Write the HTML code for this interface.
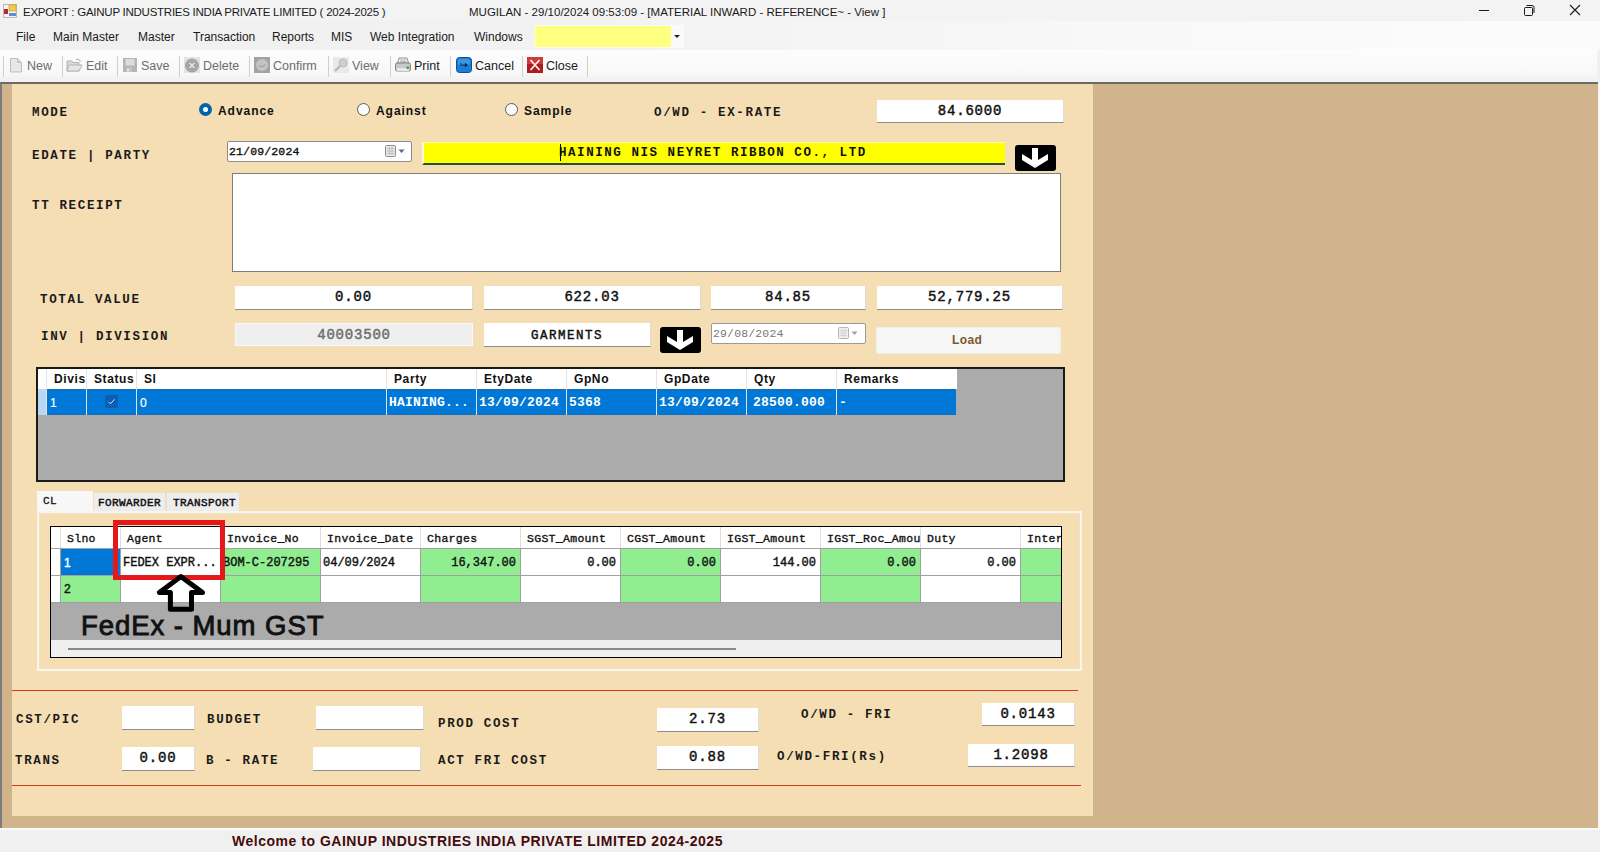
<!DOCTYPE html>
<html><head><meta charset="utf-8">
<style>
*{box-sizing:border-box;margin:0;padding:0}
html,body{width:1600px;height:852px;overflow:hidden;background:#f0f0f0;font-family:"Liberation Sans",sans-serif}
.a{position:absolute}
.nw{white-space:nowrap}
#title{left:0;top:0;width:1600px;height:21px;background:#f3f3f3}
#menu{left:0;top:21px;width:1600px;height:29px;background:linear-gradient(to right,#f0f0f0 0%,#f2f2f2 35%,#f6f6f6 60%,#fafafa 80%,#fbfbfb 100%)}
#tool{left:0;top:50px;width:1597px;height:33px;background:linear-gradient(#fdfdfd,#f8f8f8 70%,#efefef);border-bottom-right-radius:3px}
.tt{font-size:11.5px;color:#1a1a1a;white-space:nowrap;line-height:14px}
.mi{font-size:12px;color:#1a1a1a;white-space:nowrap;top:30px;line-height:14px}
.tb{font-size:12.5px;color:#6d6d6d;white-space:nowrap;top:59px;line-height:14px}
.sep{top:56px;width:1px;height:21px;background:#cfcfcf}
#mdi{left:0;top:82px;width:1598px;height:746px;background:#d2b48c;border-top:2px solid #6d6c64;border-left:2px solid #7d7d7d}
#form{left:12px;top:84px;width:1081px;height:732px;background:#f5deb3}
.lbl{font-size:12.5px;letter-spacing:1.65px;color:#1a1a1a;white-space:nowrap;font-family:"Liberation Mono",monospace;font-weight:bold;line-height:16px}
.tx{position:absolute;background:#fff;border-bottom:1px solid #8d8d8d;border-right:1px solid #dcdcdc;font-family:"Liberation Mono",monospace;font-weight:normal;-webkit-text-stroke:0.45px currentColor;font-size:14px;letter-spacing:0.8px;color:#111;text-align:center;white-space:nowrap;overflow:hidden;line-height:20px;padding-top:1px}
#status{left:0;top:828px;width:1600px;height:24px;background:#f0f0f0;border-top:2px solid #fafafa}
.rb{top:103px;font:bold 12px "Liberation Sans",sans-serif;color:#111;white-space:nowrap;line-height:16px;letter-spacing:0.95px}
.blk{background:#000;border-radius:3px}
.g1s{top:369px;width:1px;height:46px;background:#e3e3e3}
.g1h{top:372px;font:bold 12px "Liberation Sans",sans-serif;color:#111;white-space:nowrap;letter-spacing:0.6px;line-height:14px}
.g1d{top:396px;font:bold 13px "Liberation Mono",monospace;color:#fff;white-space:nowrap;line-height:14px;letter-spacing:0.2px}
.g1d.sans{font:12px "Liberation Sans",sans-serif;letter-spacing:0.5px;-webkit-text-stroke:0.2px #fff}
.tabt{font:11px "Liberation Mono",monospace;color:#111;line-height:12px;letter-spacing:0.4px;-webkit-text-stroke:0.45px #111}
.g2s{top:527px;width:1px;height:76px;background:linear-gradient(#dedede 0,#dedede 21px,#a0a0a0 21px)}
.g2h{top:532px;font:11.5px "Liberation Mono",monospace;color:#111;white-space:nowrap;line-height:14px;letter-spacing:0.3px;-webkit-text-stroke:0.35px currentColor}
.g2d{top:556px;font:12px "Liberation Mono",monospace;color:#111;white-space:nowrap;line-height:14px;-webkit-text-stroke:0.4px currentColor}
.g2d.r{text-align:right}
.g2d.sans{font-family:"Liberation Sans",sans-serif}
</style></head><body>
<!-- TITLE -->
<div id="title" class="a"></div>
<svg class="a" style="left:3px;top:4px" width="14" height="14" viewBox="0 0 14 14">
<rect x="0.5" y="0.5" width="13" height="13" fill="#f4f4f4" stroke="#b9b9b9"/>
<rect x="6" y="1" width="7" height="6" fill="#f2c94c" stroke="#c99a1c" stroke-width="0.6"/>
<rect x="1" y="5" width="4" height="5" fill="#c0282d"/>
<rect x="6" y="9" width="7" height="3" fill="#5b8ed6"/>
</svg>
<div class="a tt" style="left:23px;top:5px;letter-spacing:-0.25px">EXPORT : GAINUP INDUSTRIES INDIA PRIVATE LIMITED ( 2024-2025 )</div>
<div class="a tt" style="left:469px;top:5px">MUGILAN - 29/10/2024 09:53:09 - [MATERIAL INWARD - REFERENCE~ - View ]</div>
<div class="a" style="left:1479px;top:10px;width:10px;height:1px;background:#1a1a1a"></div>
<svg class="a" style="left:1523px;top:4px" width="13" height="12" viewBox="0 0 13 12"><rect x="1.5" y="3.5" width="8" height="8" rx="1" fill="none" stroke="#1a1a1a"/><path d="M3.5 1.5h5.5a2 2 0 0 1 2 2v5.5" fill="none" stroke="#1a1a1a"/></svg>
<svg class="a" style="left:1569px;top:4px" width="12" height="12" viewBox="0 0 12 12"><path d="M1 1L11 11M11 1L1 11" stroke="#1a1a1a" stroke-width="1.1"/></svg>
<!-- MENU -->
<div id="menu" class="a"></div>
<div class="a mi" style="left:16px">File</div>
<div class="a mi" style="left:53px">Main Master</div>
<div class="a mi" style="left:138px">Master</div>
<div class="a mi" style="left:193px">Transaction</div>
<div class="a mi" style="left:272px">Reports</div>
<div class="a mi" style="left:331px">MIS</div>
<div class="a mi" style="left:370px">Web Integration</div>
<div class="a mi" style="left:474px">Windows</div>
<div class="a" style="left:534px;top:25px;width:150px;height:23px;background:#fafafa"></div>
<div class="a" style="left:535px;top:26px;width:136px;height:21px;background:#ffff80"></div>
<div class="a" style="left:674px;top:35px;width:0;height:0;border-left:3px solid transparent;border-right:3px solid transparent;border-top:3px solid #222"></div>
<!-- TOOLBAR -->
<div id="tool" class="a"></div>
<div class="a sep" style="left:3px"></div>
<div class="a sep" style="left:62px"></div>
<div class="a sep" style="left:117px"></div>
<div class="a sep" style="left:179px"></div>
<div class="a sep" style="left:249px"></div>
<div class="a sep" style="left:328px"></div>
<div class="a sep" style="left:390px"></div>
<div class="a sep" style="left:450px"></div>
<div class="a sep" style="left:522px"></div>
<div class="a sep" style="left:587px"></div>
<!-- New icon -->
<svg class="a" style="left:9px;top:57px" width="14" height="16" viewBox="0 0 14 16"><path d="M1.5 1.5h7l4 4v9.5h-11z" fill="#e8e8e8" stroke="#bdbdbd"/><path d="M8.5 1.5v4h4" fill="#d6d6d6" stroke="#bdbdbd"/></svg>
<div class="a tb" style="left:27px">New</div>
<!-- Edit icon -->
<svg class="a" style="left:66px;top:57px" width="17" height="16" viewBox="0 0 17 16"><path d="M1 4h5l1 1.5h6v8.5h-12z" fill="#d9d9d9" stroke="#b3b3b3"/><path d="M3 8h13l-3 6h-12z" fill="#e6e6e6" stroke="#b3b3b3"/><path d="M10 2.5q3-1 4.5 2" fill="none" stroke="#b3b3b3" stroke-width="1.2"/></svg>
<div class="a tb" style="left:86px">Edit</div>
<!-- Save icon -->
<svg class="a" style="left:123px;top:58px" width="14" height="14" viewBox="0 0 14 14"><rect x="0" y="0" width="14" height="14" fill="#b4b4b4"/><rect x="2.5" y="1" width="9" height="6.5" fill="#dcdcdc"/><rect x="3" y="9.5" width="6" height="4.5" fill="#c4c4c4"/><rect x="4" y="11" width="2" height="2" fill="#ececec"/></svg>
<div class="a tb" style="left:141px">Save</div>
<!-- Delete icon -->
<svg class="a" style="left:184px;top:57px" width="16" height="16" viewBox="0 0 16 16"><rect x="0" y="0" width="16" height="16" fill="#e3e3e3"/><circle cx="8" cy="8.5" r="7" fill="#a6a6a6"/><path d="M5.5 6l5 5M10.5 6l-5 5" stroke="#e8e8e8" stroke-width="1.2"/></svg>
<div class="a tb" style="left:203px">Delete</div>
<!-- Confirm icon -->
<svg class="a" style="left:254px;top:57px" width="16" height="16" viewBox="0 0 16 16"><rect x="0" y="0" width="16" height="16" fill="#a3a3a3"/><circle cx="8" cy="8" r="6" fill="#c4c4c4"/><path d="M4.5 8.5q3.5 3 7-1" fill="none" stroke="#a8a8a8" stroke-width="1.2"/></svg>
<div class="a tb" style="left:273px">Confirm</div>
<!-- View icon -->
<svg class="a" style="left:333px;top:57px" width="16" height="16" viewBox="0 0 16 16"><rect x="0" y="0" width="16" height="16" fill="#e9e9e9"/><circle cx="10" cy="6" r="4" fill="#cfcfcf" stroke="#b9b9b9"/><path d="M7 9l-5 5" stroke="#b5b5b5" stroke-width="2.2"/></svg>
<div class="a tb" style="left:352px">View</div>
<!-- Print icon -->
<svg class="a" style="left:395px;top:57px" width="16" height="16" viewBox="0 0 16 16"><path d="M4 1h8l1.5 5h-11z" fill="#f0f0f0" stroke="#7a7a7a" stroke-width="0.8"/><path d="M5 3h6M5 4.5h6" stroke="#999" stroke-width="0.6"/><rect x="0.5" y="6" width="15" height="8" rx="1.5" fill="#c8c8c8" stroke="#6f6f6f" stroke-width="0.8"/><rect x="2" y="11" width="12" height="3" fill="#e8e8e8"/><rect x="11.5" y="9.5" width="2.5" height="2.5" fill="#2fae3a"/></svg>
<div class="a tb" style="left:414px;color:#1a1a1a">Print</div>
<!-- Cancel icon -->
<svg class="a" style="left:456px;top:57px" width="16" height="16" viewBox="0 0 16 16"><rect x="0.5" y="0.5" width="15" height="15" rx="3" fill="#1a7fd4" stroke="#0d4f8c"/><rect x="2" y="2" width="12" height="6" rx="2" fill="#4aa6ee" opacity="0.6"/><path d="M5 6v3M7 7v2M9 6.5l2.5 1.5l-2.5 1.5z" stroke="#0a2a50" stroke-width="1" fill="#0a2a50"/></svg>
<div class="a tb" style="left:475px;color:#1a1a1a">Cancel</div>
<!-- Close icon -->
<svg class="a" style="left:527px;top:57px" width="16" height="16" viewBox="0 0 16 16"><rect x="0" y="0" width="16" height="16" fill="#b01c1c"/><rect x="0" y="0" width="16" height="7" fill="#cf3a3a"/><path d="M3.5 3l9 10M12.5 3l-9 10" stroke="#fff" stroke-width="1.6"/></svg>
<div class="a tb" style="left:546px;color:#1a1a1a">Close</div>

<!-- MDI -->
<div id="mdi" class="a"></div>
<div id="form" class="a"></div><div class="a" style="left:14px;top:90px;width:1079px;height:1px;background:#eadcc0"></div>
<!-- row MODE -->
<div class="a lbl" style="left:32px;top:105px">MODE</div>
<div class="a" style="left:199px;top:103px;width:13px;height:13px;border-radius:50%;background:#0063b1"></div>
<div class="a" style="left:203px;top:107px;width:5px;height:5px;border-radius:50%;background:#fff"></div>
<div class="a rb" style="left:218px">Advance</div>
<div class="a" style="left:357px;top:103px;width:13px;height:13px;border-radius:50%;background:#fafafa;border:1px solid #5c5c5c"></div>
<div class="a rb" style="left:376px">Against</div>
<div class="a" style="left:505px;top:103px;width:13px;height:13px;border-radius:50%;background:#fafafa;border:1px solid #5c5c5c"></div>
<div class="a rb" style="left:524px">Sample</div>
<div class="a lbl" style="left:654px;top:105px">O/WD - EX-RATE</div>
<div class="tx" style="left:877px;top:100px;width:187px;height:23px">84.6000</div>
<!-- row EDATE -->
<div class="a lbl" style="left:32px;top:148px">EDATE | PARTY</div>
<div class="a" style="left:227px;top:141px;width:185px;height:21px;background:#fff;border:1px solid #8c8c8c;border-radius:2px"></div>
<div class="a nw" style="left:229px;top:144px;font:11.5px 'Liberation Mono',monospace;color:#111;line-height:16px;letter-spacing:0.15px;-webkit-text-stroke:0.35px #111">21/09/2024</div>
<svg class="a" style="left:384px;top:144px" width="22" height="14" viewBox="0 0 22 14"><rect x="1.5" y="1.5" width="10" height="11" rx="1" fill="#e6e6e6" stroke="#8e8e8e"/><path d="M3 4.5h7M3 7h7M3 9.5h7M5.5 3v8M8 3v8" stroke="#b5b5b5" stroke-width="0.7"/><path d="M14.5 5.5h6l-3 3.5z" fill="#4a6a95"/></svg>
<div class="a" style="left:422px;top:142px;width:583px;height:23px;background:#ffff00;border-bottom:2px solid #22503c;border-left:2px solid #fdfbe8;border-top:1px solid #fffbb0"></div>
<div class="a nw" style="left:559px;top:145px;font:bold 12.5px 'Liberation Mono',monospace;color:#111;line-height:16px;letter-spacing:1.55px">HAINING NIS NEYRET RIBBON CO., LTD</div>
<div class="a" style="left:560px;top:144px;width:1px;height:17px;background:#000"></div>
<div class="a blk" style="left:1015px;top:145px;width:41px;height:26px"><svg width="41" height="26" viewBox="0 0 41 26" style="position:absolute;left:0;top:0"><path d="M17 3H23V15L33 9V15L20 23L7 15V9L17 15Z" fill="#fff"/></svg></div>
<!-- TT receipt -->
<div class="a lbl" style="left:32px;top:198px">TT RECEIPT</div>
<div class="a" style="left:232px;top:173px;width:829px;height:99px;background:#fff;border:1px solid #7c7c7c"></div>
<!-- Total value -->
<div class="a lbl" style="left:40px;top:292px">TOTAL VALUE</div>
<div class="tx" style="left:235px;top:286px;width:238px;height:24px">0.00</div>
<div class="tx" style="left:484px;top:286px;width:217px;height:24px">622.03</div>
<div class="tx" style="left:711px;top:286px;width:155px;height:24px">84.85</div>
<div class="tx" style="left:877px;top:286px;width:186px;height:24px">52,779.25</div>
<!-- INV -->
<div class="a lbl" style="left:41px;top:329px">INV | DIVISION</div>
<div class="tx" style="left:235px;top:323px;width:238px;height:23px;background:#efefef;color:#6d6d6d;border-bottom:1px solid #fafafa;border-right:1px solid #fafafa;border-top:1px solid #f7f7f7;border-left:1px solid #f7f7f7">40003500</div>
<div class="tx" style="left:484px;top:323px;width:167px;height:24px;font-size:12.5px;letter-spacing:1.5px;padding-top:3px">GARMENTS</div>
<div class="a blk" style="left:660px;top:327px;width:41px;height:26px"><svg width="41" height="26" viewBox="0 0 41 26" style="position:absolute;left:0;top:0"><path d="M17 3H23V15L33 9V15L20 23L7 15V9L17 15Z" fill="#fff"/></svg></div>
<div class="a" style="left:711px;top:323px;width:155px;height:21px;background:#fff;border:1px solid #9a9a9a;border-radius:2px"></div>
<div class="a nw" style="left:713px;top:326px;font:11.5px 'Liberation Mono',monospace;color:#777;line-height:16px;letter-spacing:0.15px">29/08/2024</div>
<svg class="a" style="left:837px;top:326px" width="22" height="14" viewBox="0 0 22 14"><rect x="1.5" y="1.5" width="10" height="11" rx="1" fill="#efefef" stroke="#b5b5b5"/><path d="M3 4.5h7M3 7h7M3 9.5h7M5.5 3v8M8 3v8" stroke="#cfcfcf" stroke-width="0.7"/><path d="M14.5 5.5h6l-3 3.5z" fill="#a0a0a0"/></svg>
<div class="a" style="left:876px;top:327px;width:185px;height:27px;background:#f6f6f6;border-radius:2px;border:1px solid #efefef"></div>
<div class="a nw" style="left:952px;top:333px;font:bold 12px 'Liberation Sans',sans-serif;color:#7b5a2b;line-height:14px;letter-spacing:0.4px">Load</div>
<div class="a" style="left:36px;top:367px;width:1029px;height:115px;background:#ababab;border:2px solid #1a1a1a"></div>
<div class="a" style="left:38px;top:369px;width:919px;height:20px;background:#fff"></div>
<div class="a" style="left:38px;top:389px;width:9px;height:26px;background:#b9d7f0"></div>
<div class="a" style="left:47px;top:389px;width:909px;height:26px;background:#0078d7;border-top:1px solid #1c6cb4;border-bottom:1px solid #1c6cb4"></div>
<!-- col separators header -->
<div class="a g1s" style="left:46px"></div>
<div class="a g1s" style="left:86px"></div>
<div class="a g1s" style="left:136px"></div>
<div class="a g1s" style="left:386px"></div>
<div class="a g1s" style="left:476px"></div>
<div class="a g1s" style="left:566px"></div>
<div class="a g1s" style="left:656px"></div>
<div class="a g1s" style="left:746px"></div>
<div class="a g1s" style="left:836px"></div>
<div class="a g1h" style="left:54px">Divis</div>
<div class="a g1h" style="left:94px">Status</div>
<div class="a g1h" style="left:144px">Sl</div>
<div class="a g1h" style="left:394px">Party</div>
<div class="a g1h" style="left:484px">EtyDate</div>
<div class="a g1h" style="left:574px">GpNo</div>
<div class="a g1h" style="left:664px">GpDate</div>
<div class="a g1h" style="left:754px">Qty</div>
<div class="a g1h" style="left:844px">Remarks</div>
<div class="a g1d sans" style="left:50px">1</div>
<div class="a" style="left:105px;top:395px;width:13px;height:13px;background:#0a5fb4;border-radius:2px"></div>
<svg class="a" style="left:105px;top:395px" width="13" height="13" viewBox="0 0 13 13"><path d="M3.5 6.8l2 2l4-4.5" fill="none" stroke="#d8e8f8" stroke-width="1"/></svg>
<div class="a g1d sans" style="left:140px">0</div>
<div class="a g1d" style="left:389px">HAINING...</div>
<div class="a g1d" style="left:479px">13/09/2024</div>
<div class="a g1d" style="left:569px">5368</div>
<div class="a g1d" style="left:659px">13/09/2024</div>
<div class="a g1d" style="left:753px">28500.000</div>
<div class="a g1d" style="left:839px">-</div>

<!-- tabs -->
<div class="a" style="left:37px;top:491px;width:56px;height:22px;background:#f7f7f7"></div>
<div class="a nw tabt" style="left:43px;top:495px;font-weight:normal;-webkit-text-stroke:0.3px #111">CL</div>
<div class="a" style="left:94px;top:493px;width:72px;height:19px;background:#ededed;border-right:1px solid #e0e0e0"></div>
<div class="a nw tabt" style="left:98px;top:497px">FORWARDER</div>
<div class="a" style="left:167px;top:493px;width:72px;height:19px;background:#ededed"></div>
<div class="a nw tabt" style="left:173px;top:497px">TRANSPORT</div>
<!-- tab page -->
<div class="a" style="left:37px;top:511px;width:1045px;height:160px;border:2px solid #fbf4e8;border-top:2px solid #fbf4e8"></div>
<div class="a" style="left:39px;top:513px;width:1041px;height:156px;border:1px solid #efe2c8"></div>
<!-- grid2 -->
<div class="a" style="left:50px;top:526px;width:1012px;height:132px;background:#ababab;border:1px solid #000"></div>
<div class="a" style="left:51px;top:527px;width:1010px;height:21px;background:#fff"></div>
<div class="a" style="left:51px;top:548px;width:10px;height:55px;background:#fff"></div>
<!-- cells row1 and row2 -->
<div class="a" style="left:61px;top:548px;width:60px;height:27px;background:#0078d7"></div>
<div class="a" style="left:61px;top:575px;width:60px;height:28px;background:#90ee90"></div>
<div class="a" style="left:121px;top:548px;width:100px;height:55px;background:#fff"></div>
<div class="a" style="left:221px;top:548px;width:100px;height:55px;background:#90ee90"></div>
<div class="a" style="left:321px;top:548px;width:100px;height:55px;background:#fff"></div>
<div class="a" style="left:421px;top:548px;width:100px;height:55px;background:#90ee90"></div>
<div class="a" style="left:521px;top:548px;width:100px;height:55px;background:#fff"></div>
<div class="a" style="left:621px;top:548px;width:100px;height:55px;background:#90ee90"></div>
<div class="a" style="left:721px;top:548px;width:100px;height:55px;background:#fff"></div>
<div class="a" style="left:821px;top:548px;width:100px;height:55px;background:#90ee90"></div>
<div class="a" style="left:921px;top:548px;width:100px;height:55px;background:#fff"></div>
<div class="a" style="left:1021px;top:548px;width:40px;height:55px;background:#90ee90"></div>
<!-- grid lines -->
<div class="a" style="left:51px;top:548px;width:1010px;height:1px;background:#a0a0a0"></div>
<div class="a" style="left:51px;top:575px;width:1010px;height:1px;background:#a0a0a0"></div>
<div class="a" style="left:51px;top:602px;width:1010px;height:1px;background:#a0a0a0"></div>
<div class="a g2s" style="left:60px"></div>
<div class="a g2s" style="left:120px"></div>
<div class="a g2s" style="left:220px"></div>
<div class="a g2s" style="left:320px"></div>
<div class="a g2s" style="left:420px"></div>
<div class="a g2s" style="left:520px"></div>
<div class="a g2s" style="left:620px"></div>
<div class="a g2s" style="left:720px"></div>
<div class="a g2s" style="left:820px"></div>
<div class="a g2s" style="left:920px"></div>
<div class="a g2s" style="left:1020px"></div>
<div class="a g2h" style="left:67px">Slno</div>
<div class="a g2h" style="left:127px">Agent</div>
<div class="a g2h" style="left:227px">Invoice_No</div>
<div class="a g2h" style="left:327px">Invoice_Date</div>
<div class="a g2h" style="left:427px">Charges</div>
<div class="a g2h" style="left:527px">SGST_Amount</div>
<div class="a g2h" style="left:627px">CGST_Amount</div>
<div class="a g2h" style="left:727px">IGST_Amount</div>
<div class="a g2h" style="left:827px">IGST_Roc_Amou</div>
<div class="a g2h" style="left:927px">Duty</div>
<div class="a g2h" style="left:1027px;width:34px;overflow:hidden">Inter</div>
<div class="a g2d sans" style="left:64px;color:#fff;font-size:12px">1</div>
<div class="a g2d" style="left:123px">FEDEX EXPR...</div>
<div class="a g2d" style="left:223px">BOM-C-207295</div>
<div class="a g2d" style="left:323px">04/09/2024</div>
<div class="a g2d r" style="left:421px;width:95px">16,347.00</div>
<div class="a g2d r" style="left:521px;width:95px">0.00</div>
<div class="a g2d r" style="left:621px;width:95px">0.00</div>
<div class="a g2d r" style="left:721px;width:95px">144.00</div>
<div class="a g2d r" style="left:821px;width:95px">0.00</div>
<div class="a g2d r" style="left:921px;width:95px">0.00</div>
<div class="a g2d sans" style="left:64px;top:582px;font-size:12px">2</div>
<!-- scrollbar -->
<div class="a" style="left:51px;top:640px;width:1010px;height:17px;background:#efefef"></div>
<div class="a" style="left:68px;top:648px;width:668px;height:2px;background:#888"></div>
<!-- annotation -->
<div class="a" style="left:113px;top:520px;width:112px;height:60px;border:5.5px solid #e3191b"></div>
<svg class="a" style="left:150px;top:568px" width="60" height="48" viewBox="0 0 60 48"><path d="M30.9 8.5L9.4 24.5H20.4V41.3H41.5V24.5H52.5Z" fill="none" stroke="#000" stroke-width="5" stroke-linejoin="round"/></svg>
<div class="a nw" style="left:81px;top:609px;font:27.5px 'Liberation Sans',sans-serif;color:#111;letter-spacing:0.95px;line-height:34px;-webkit-text-stroke:0.9px #111">FedEx - Mum GST</div>

<div class="a" style="left:12px;top:690px;width:1066px;height:1px;background:#d4371c"></div>
<div class="a" style="left:12px;top:785px;width:1069px;height:1px;background:#d4371c"></div>
<div class="a lbl" style="left:16px;top:712px">CST/PIC</div>
<div class="tx" style="left:122px;top:706px;width:73px;height:24px"></div>
<div class="a lbl" style="left:207px;top:712px">BUDGET</div>
<div class="tx" style="left:316px;top:706px;width:108px;height:24px"></div>
<div class="a lbl" style="left:438px;top:716px">PROD COST</div>
<div class="tx" style="left:657px;top:708px;width:102px;height:24px">2.73</div>
<div class="a lbl" style="left:801px;top:707px">O/WD - FRI</div>
<div class="tx" style="left:982px;top:703px;width:93px;height:23px">0.0143</div>
<div class="a lbl" style="left:15px;top:753px">TRANS</div>
<div class="tx" style="left:122px;top:747px;width:73px;height:24px">0.00</div>
<div class="a lbl" style="left:206px;top:753px">B - RATE</div>
<div class="tx" style="left:313px;top:747px;width:108px;height:24px"></div>
<div class="a lbl" style="left:438px;top:753px">ACT FRI COST</div>
<div class="tx" style="left:657px;top:746px;width:102px;height:24px">0.88</div>
<div class="a lbl" style="left:777px;top:749px">O/WD-FRI(Rs)</div>
<div class="tx" style="left:968px;top:744px;width:107px;height:23px">1.2098</div>


<!-- STATUS -->
<div id="status" class="a"></div><div class="a" style="left:1598px;top:83px;width:2px;height:745px;background:#f7f7f7"></div>
<div class="a nw" style="left:232px;top:832px;font-size:14px;font-weight:bold;color:#470b0b;line-height:18px;letter-spacing:0.52px">Welcome to GAINUP INDUSTRIES INDIA PRIVATE LIMITED 2024-2025</div>
</body></html>
